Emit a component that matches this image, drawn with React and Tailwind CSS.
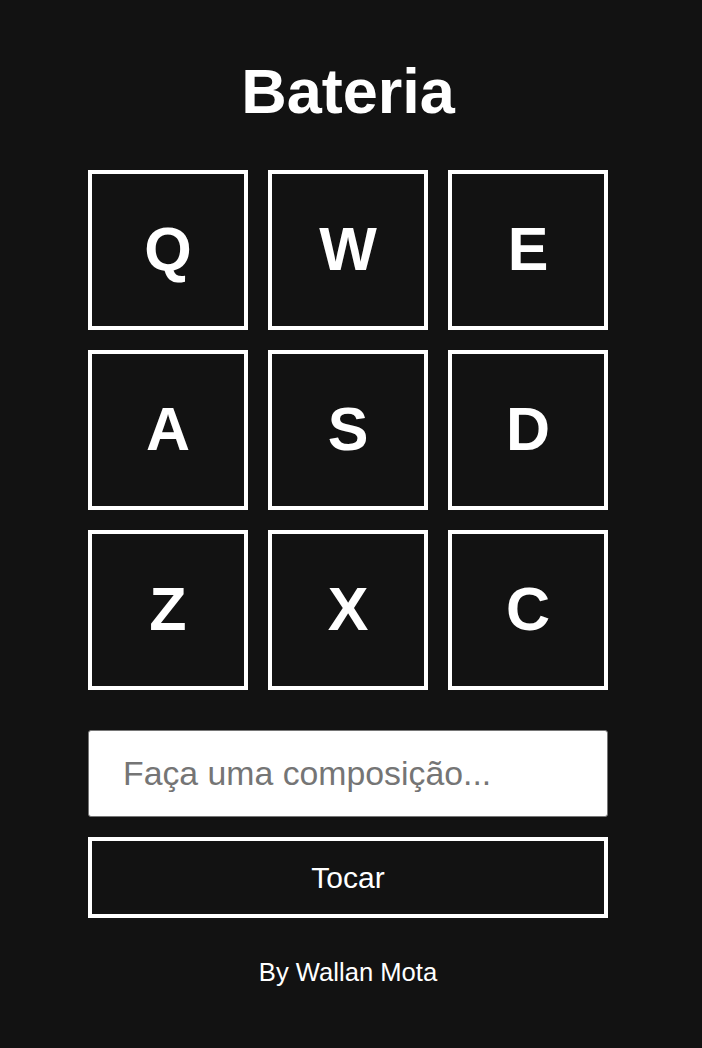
const keys = ["Q", "W", "E", "A", "S", "D", "Z", "X", "C"];

export default function App() {
  return (
    <div
      className="flex min-h-screen w-full flex-col items-center bg-[#121212] pr-[6px] pt-[55px] text-white"
      style={{ fontFamily: '"Liberation Sans", Arial, sans-serif' }}
    >
      <h1 className="text-[63px] font-bold leading-[72px]">Bateria</h1>

      <div className="mt-[43px] grid w-[520px] grid-cols-3 gap-5">
        {keys.map((k) => (
          <button
            key={k}
            type="button"
            className="flex h-[160px] items-center justify-center border-4 border-white bg-[#121212] text-[61px] font-bold text-white"
          >
            {k}
          </button>
        ))}
      </div>

      <input
        type="text"
        placeholder="Faça uma composição..."
        className="mt-10 h-[87px] w-[520px] rounded-[3px] border border-[#767676] bg-white px-[34px] text-[33.8px] text-black outline-none placeholder:text-[#757575]"
      />

      <button
        type="button"
        className="mt-5 h-[81px] w-[520px] border-4 border-white bg-[#121212] text-[30px] text-white"
      >
        Tocar
      </button>

      <p className="mt-[39px] text-[25.6px] leading-[30px]">By Wallan Mota</p>
    </div>
  );
}
